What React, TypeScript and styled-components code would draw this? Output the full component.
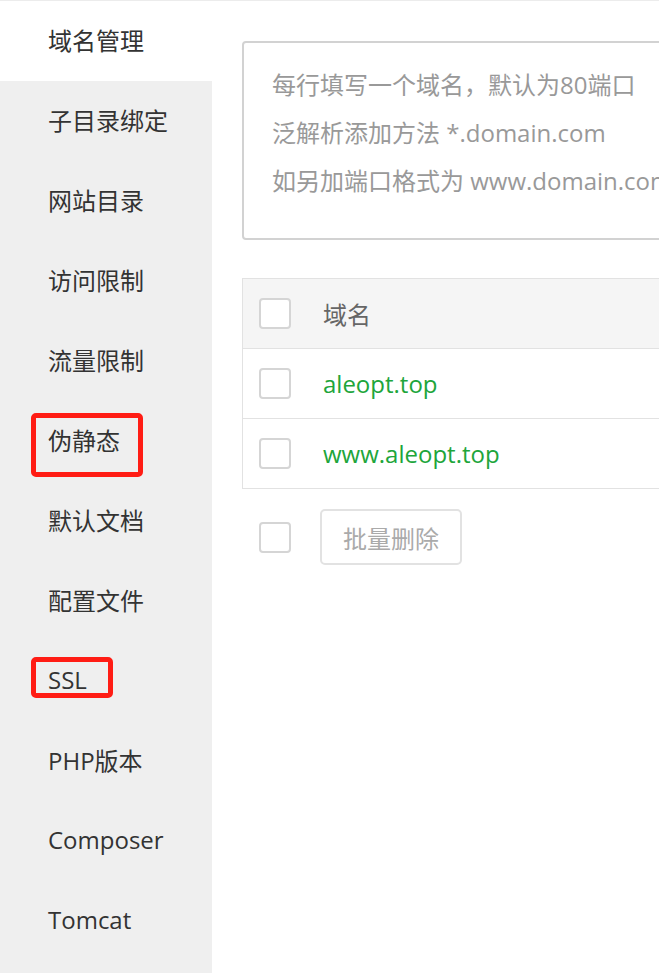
import React from "react";
import styled, { createGlobalStyle } from "styled-components";

const Global = createGlobalStyle`
  html, body { margin: 0; padding: 0; background: #fff; }
  body {
    font-family: "Open Sans", "Noto Sans CJK SC", sans-serif;
    overflow: hidden;
  }
  * { box-sizing: border-box; }
`;

const Page = styled.div`
  width: 659px;
  height: 973px;
  display: flex;
  border-top: 1px solid #ececec;
  overflow: hidden;
`;

const Sidebar = styled.nav`
  width: 212px;
  flex-shrink: 0;
  background: #efefef;
  display: flex;
  flex-direction: column;
`;

const NavItem = styled.div<{ $active?: boolean }>`
  position: relative;
  height: 80px;
  display: flex;
  align-items: center;
  padding-left: 48px;
  padding-bottom: 3px;
  font-size: 24px;
  color: #333;
  background: ${(p) => (p.$active ? "#fff" : "transparent")};
  white-space: nowrap;
`;

const Highlight = styled.span<{ $w: number; $h: number; $top: number }>`
  position: absolute;
  left: 31px;
  top: ${(p) => p.$top}px;
  width: ${(p) => p.$w}px;
  height: ${(p) => p.$h}px;
  border: 5px solid #ff1c14;
  border-radius: 5px;
  pointer-events: none;
`;

const Main = styled.main`
  flex: 1;
  min-width: 0;
  padding: 40px 0 0 30px;
  display: flex;
  flex-direction: column;
  overflow: hidden;
`;

const DomainInput = styled.div`
  width: 460px;
  height: 199px;
  border: 2px solid #d2d2d2;
  border-radius: 4px;
  padding: 18px 0 0 28px;
  font-size: 24px;
  line-height: 48px;
  color: #999;
  white-space: nowrap;
  overflow: hidden;
`;

const Table = styled.div`
  margin-top: 38px;
  width: 460px;
  border: 1px solid #e2e2e2;
  border-right: none;
`;

const Row = styled.div<{ $head?: boolean }>`
  height: ${(p) => (p.$head ? 69 : 70)}px;
  display: flex;
  align-items: center;
  padding-left: 16px;
  background: ${(p) => (p.$head ? "#f5f5f5" : "#fff")};
  border-top: ${(p) => (p.$head ? "none" : "1px solid #e2e2e2")};
  font-size: 24px;
`;

const Check = styled.span`
  width: 32px;
  height: 31px;
  border: 2px solid #d5d5d5;
  border-radius: 4px;
  background: #fff;
  flex-shrink: 0;
`;

const HeadText = styled.span`
  margin-left: 32px;
  color: #666;
`;

const Link = styled.a`
  margin-left: 32px;
  color: #20a53a;
  text-decoration: none;
`;

const Footer = styled.div`
  margin-top: 20px;
  display: flex;
  align-items: center;
  padding-left: 17px;
  gap: 29px;
`;

const Button = styled.button`
  height: 56px;
  padding: 0 21px;
  border: 2px solid #e2e2e2;
  border-radius: 5px;
  background: #fff;
  font-family: inherit;
  font-size: 24px;
  color: #aaa;
`;

const items = [
  "域名管理",
  "子目录绑定",
  "网站目录",
  "访问限制",
  "流量限制",
  "伪静态",
  "默认文档",
  "配置文件",
  "SSL",
  "PHP版本",
  "Composer",
  "Tomcat",
];

const boxes: Record<string, [number, number, number]> = {
  伪静态: [112, 64, 12],
  SSL: [82, 41, 16],
};

export default function App() {
  return (
    <>
      <Global />
      <Page>
        <Sidebar>
          {items.map((t, i) => (
            <NavItem key={t} $active={i === 0}>
              {t}
              {boxes[t] && (
                <Highlight $w={boxes[t][0]} $h={boxes[t][1]} $top={boxes[t][2]} />
              )}
            </NavItem>
          ))}
        </Sidebar>
        <Main>
          <DomainInput>
            <div>每行填写一个域名，默认为80端口</div>
            <div>泛解析添加方法 *.domain.com</div>
            <div>如另加端口格式为 www.domain.com:88</div>
          </DomainInput>
          <Table>
            <Row $head>
              <Check />
              <HeadText>域名</HeadText>
            </Row>
            <Row>
              <Check />
              <Link>aleopt.top</Link>
            </Row>
            <Row>
              <Check />
              <Link>www.aleopt.top</Link>
            </Row>
          </Table>
          <Footer>
            <Check />
            <Button>批量删除</Button>
          </Footer>
        </Main>
      </Page>
    </>
  );
}
